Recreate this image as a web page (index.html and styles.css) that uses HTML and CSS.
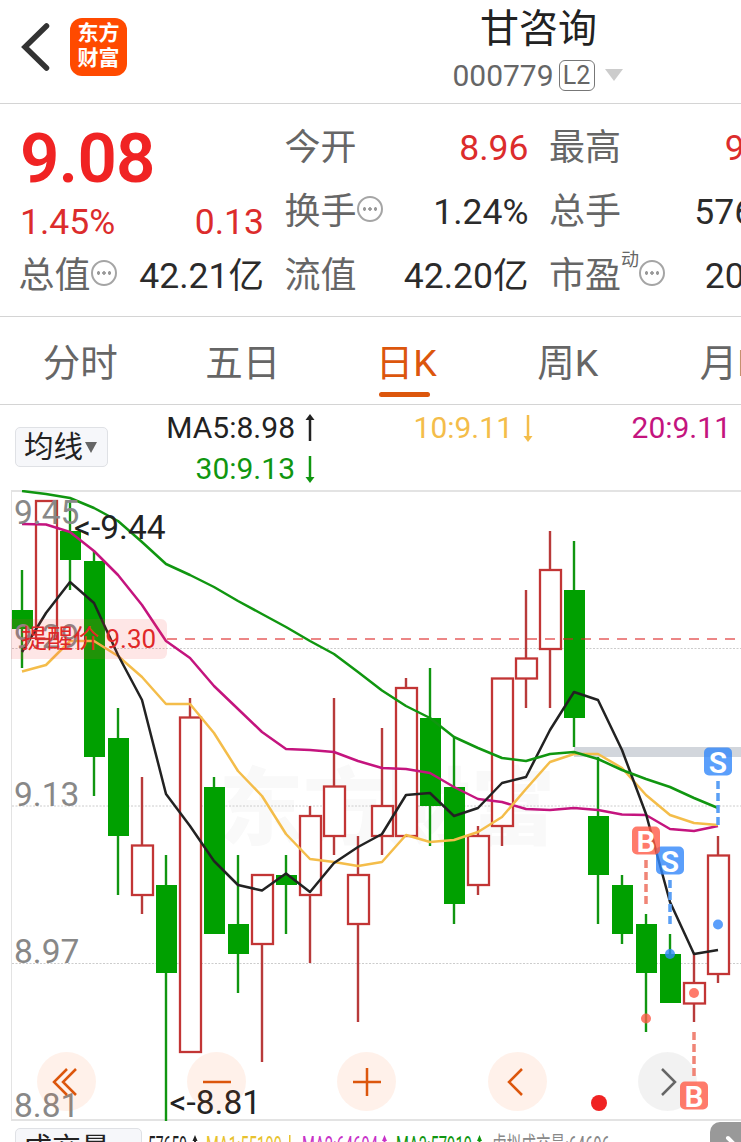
FILE: index.html
```html
<!DOCTYPE html>
<html lang="zh-CN">
<head>
    <meta charset="UTF-8">
    <meta name="viewport" content="width=device-width, initial-scale=1.0">
    <title>甘咨询 000779</title>
    <link rel="stylesheet" href="styles.css">
</head>
<body>

<div class="app">
    <header class="header">
        <div class="header-left">
            <svg class="back" width="30" height="50" viewBox="0 0 30 50"><path d="M26.500 4 L5 25 L26.500 46" fill="none" stroke="#333" stroke-width="5.500" stroke-linecap="round"/></svg>
            <div class="logo"><span>东方</span><span>财富</span></div>
        </div>
        <div class="stock">
            <div class="stock-name">甘咨询</div>
            <div class="stock-code">000779<span class="level">L2</span><span class="caret"></span></div>
        </div>
    </header>

    <section class="quote">
        <div class="quote-col first">
            <div class="price">9.08</div>
            <div class="row change"><span class="up">1.45%</span><span class="up">0.13</span></div>
            <div class="row"><label>总值<i class="more"></i></label><span>42.21亿</span></div>
        </div>
        <div class="quote-col">
            <div class="row"><label>今开</label><span class="up">8.96</span></div>
            <div class="row"><label>换手<i class="more"></i></label><span>1.24%</span></div>
            <div class="row"><label>流值</label><span>42.20亿</span></div>
        </div>
        <div class="quote-col">
            <div class="row"><label>最高</label><span class="up">9.10</span></div>
            <div class="row"><label>总手</label><span>57659</span></div>
            <div class="row"><label>市盈<sup>动</sup><i class="more"></i></label><span>20.29</span></div>
        </div>
    </section>

    <nav class="tabs">
        <div class="tab">分时</div>
        <div class="tab">五日</div>
        <div class="tab active">日K</div>
        <div class="tab">周K</div>
        <div class="tab">月K</div>
    </nav>

    <section class="averages">
        <div class="select">均线<span class="select-caret"></span></div>
        <div class="ma-list">
            <div class="ma ma5">MA5:8.98<svg width="12" height="28" viewBox="0 0 12 28"><path d="M6 27V4" stroke="currentColor" stroke-width="2.500"/><path d="M6 0L10.500 6H1.500z" fill="currentColor"/></svg></div>
            <div class="ma ma10">10:9.11<svg width="12" height="28" viewBox="0 0 12 28"><path d="M6 1V24" stroke="currentColor" stroke-width="2.500"/><path d="M6 28L10.500 22H1.500z" fill="currentColor"/></svg></div>
            <div class="ma ma20">20:9.11<svg width="12" height="28" viewBox="0 0 12 28"><path d="M6 1V24" stroke="currentColor" stroke-width="2.500"/><path d="M6 28L10.500 22H1.500z" fill="currentColor"/></svg></div>
            <div class="ma ma30">30:9.13<svg width="12" height="28" viewBox="0 0 12 28"><path d="M6 1V24" stroke="currentColor" stroke-width="2.500"/><path d="M6 28L10.500 22H1.500z" fill="currentColor"/></svg></div>
        </div>
    </section>

    <section class="chart">
        <svg class="kline" width="1080" height="632" viewBox="0 490 1080 632">
            <text class="watermark" x="219" y="838">东方财富</text>
            <g class="grid">
                <path d="M12 648.500H1080M12 806H1080M12 963.500H1080"/>
            </g>
            <path class="frame" d="M1080 491H11.500M1080 1120H11.500"/>
            <path class="frame side" d="M11.500 490V1121"/>
            <rect x="574" y="747" width="506" height="10" fill="#d2d6dc"/>
            <g id="candles"></g>
            <g id="lines"></g>
            <g class="axis">
                <text x="14" y="524">9.45</text>
                <text x="14" y="648">9.29</text>
                <text x="14" y="806">9.13</text>
                <text x="14" y="963">8.97</text>
                <text x="14" y="1117">8.81</text>
            </g>
            <path class="alert-line" d="M167 639H738"/>
            <path class="alert-box" d="M11 619H161a6 6 0 0 1 6 6V653a6 6 0 0 1-6 6H11z"/>
            <text class="alert-text" x="21" y="648">提醒价 9.30</text>
            <text class="mark" x="74" y="539">&lt;-9.44</text>
            <text class="mark" x="169.500" y="1114">&lt;-8.81</text>
            <circle cx="599" cy="1103" r="8" fill="#f02323"/>
        </svg>

        <div class="controls">
            <button><svg width="30" height="30" viewBox="0 0 30 30"><path d="M15 2L2 15L15 28M24 2L11 15L24 28"/></svg></button>
            <button><svg width="30" height="30" viewBox="0 0 30 30"><path d="M1 15H29"/></svg></button>
            <button><svg width="30" height="30" viewBox="0 0 30 30"><path d="M1 15H29M15 1V29"/></svg></button>
            <button><svg width="30" height="30" viewBox="0 0 30 30"><path d="M20 2L7 15L20 28"/></svg></button>
            <button class="disabled"><svg width="30" height="30" viewBox="0 0 30 30"><path d="M10 2L23 15L10 28"/></svg></button>
        </div>

        <svg class="trades" width="1080" height="632" viewBox="0 490 1080 632">
            <g class="sell">
                <path d="M718 781V825M670 880V925"/>
                <circle cx="718" cy="924.500" r="5"/>
                <circle cx="670" cy="954" r="5"/>
                <rect x="704" y="747.500" width="28" height="28" rx="5"/>
                <rect x="656" y="846.500" width="28" height="28" rx="5"/>
                <text x="718" y="772.500">S</text>
                <text x="670" y="871.500">S</text>
            </g>
            <g class="buy">
                <path d="M646 860V905M694 1032V1077"/>
                <circle cx="646" cy="1018.500" r="5"/>
                <circle cx="694" cy="993" r="5"/>
                <rect x="632" y="826.500" width="28" height="28" rx="5"/>
                <rect x="680" y="1081.500" width="28" height="28" rx="5"/>
                <text x="646" y="851.500">B</text>
                <text x="694" y="1106.500">B</text>
            </g>
        </svg>
    </section>

    <section class="volume">
        <div class="volume-select">成交量</div>
        <svg class="volume-info" width="600" height="40" viewBox="141 1122 600 40">
            <text x="147" y="1155" textLength="39" lengthAdjust="spacingAndGlyphs" fill="#222">57659</text>
            <text x="205" y="1155" textLength="76" lengthAdjust="spacingAndGlyphs" fill="#e8c22e">MA1:55199</text>
            <text x="301" y="1155" textLength="76" lengthAdjust="spacingAndGlyphs" fill="#c832c8">MA2:64694</text>
            <text x="395" y="1155" textLength="76" lengthAdjust="spacingAndGlyphs" fill="#109610">MA3:57919</text>
            <text x="491" y="1155" textLength="118" lengthAdjust="spacingAndGlyphs" fill="#888">虚拟成交量:64696</text>
            <path d="M194 1135l2.500 6h-1.500v16h-2v-16h-1.500z" fill="#222"/>
            <path d="M288 1135h1.500v20h-1.500z" fill="#e8c22e"/>
            <path d="M383.500 1135l2.500 6h-1.500v16h-2v-16h-1.500z" fill="#c832c8"/>
            <path d="M478.500 1135l2.500 6h-1.500v16h-2v-16h-1.500z" fill="#109610"/>
        </svg>
        <div class="expand"><svg width="30" height="30" viewBox="0 0 30 30"><path d="M6 4L18 16L6 28" fill="none" stroke="#fff" stroke-width="4" stroke-linecap="round"/></svg></div>
    </section>
</div>

<script src="chart.js"></script>
</body>
</html>
```

FILE: styles.css
```css
* {
    box-sizing: border-box;
}
html {
    overflow: hidden;
}
body {
    margin: 0;
    width: 741px;
    height: 1142px;
    overflow: hidden;
    background: #fff;
    color: #2b2b2b;
    font-family: Roboto, "Noto Sans CJK SC", sans-serif;
}
.app {
    width: 1080px;
}
.header {
    display: grid;
    grid-template-columns: 200px 1fr 200px;
    height: 104px;
    border-bottom: 1px solid #d4d4d4;
}
.header-left {
    display: flex;
    align-items: center;
    height: 93px;
    padding-left: 20px;
    gap: 20px;
}
.logo {
    display: flex;
    flex-direction: column;
    align-items: center;
    justify-content: center;
    width: 57px;
    height: 58px;
    padding-bottom: 2px;
    border-radius: 12px;
    background: #ff4a00;
    color: #fff;
    font-size: 21px;
    font-weight: 700;
    line-height: 25px;
}
.stock {
    text-align: center;
}
.stock-name {
    height: 56px;
    padding-right: 3px;
    font-size: 39px;
    line-height: 58px;
    color: #222;
}
.stock-code {
    display: flex;
    align-items: center;
    justify-content: center;
    height: 38px;
    padding-right: 5px;
    font-size: 30px;
    color: #666;
}
.level {
    width: 36px;
    height: 31px;
    margin-left: 5px;
    border: 1px solid #777;
    border-radius: 6px;
    font-size: 25px;
    line-height: 30px;
}
.caret {
    margin-left: 10px;
    border: 9px solid transparent;
    border-top: 12px solid #ccc;
    border-bottom: 0;
}
.quote {
    display: grid;
    grid-template-columns: 244px 242.5px 243.5px;
    column-gap: 22px;
    height: 213px;
    padding: 12px 20px 0;
    border-bottom: 1px solid #d4d4d4;
}
.row {
    display: flex;
    justify-content: space-between;
    align-items: center;
    height: 64px;
    font-size: 35.5px;
    line-height: 42px;
    white-space: nowrap;
}
.row label {
    display: flex;
    align-items: center;
    margin-left: -1.5px;
    font-size: 36px;
    color: #666;
}
.row sup {
    align-self: flex-start;
    margin-top: -5px;
    font-size: 18px;
    line-height: 20px;
}
.price {
    height: 84px;
    font-size: 69px;
    font-weight: 600;
    line-height: 86px;
    letter-spacing: -0.8px;
    color: #f02323;
}
.change {
    height: 44px;
}
.up {
    color: #dc2c2c;
}
.more {
    width: 26px;
    height: 26px;
    margin-top: -6px;
    border: 2px solid #a5a5a5;
    border-radius: 50%;
    background:
        radial-gradient(circle at 5.500px 11px, #999 1.500px, transparent 2px),
        radial-gradient(circle at 11px 11px, #999 1.500px, transparent 2px),
        radial-gradient(circle at 16.500px 11px, #999 1.500px, transparent 2px);
}
.tabs {
    display: flex;
    height: 88px;
    border-bottom: 1px solid #d4d4d4;
}
.tab {
    display: flex;
    flex-direction: column;
    align-items: center;
    width: 162.5px;
    font-size: 37.5px;
    line-height: 86px;
    height: 87px;
    padding-top: 3px;
    padding-right: 2px;
    color: #666;
}
.tab.active {
    padding-right: 0;
    color: #dc560c;
}
.tab.active::after {
    content: "";
    width: 51px;
    height: 5px;
    margin-top: -14px;
    margin-right: 4px;
    border-radius: 3px;
    background: #dc560c;
}
.averages {
    display: flex;
    height: 85px;
}
.select {
    display: flex;
    align-items: center;
    width: 93px;
    height: 40px;
    margin: 22px 0 0 15px;
    padding-left: 8px;
    border: 1px solid #dfe1e5;
    border-radius: 5px;
    background: #f6f7fa;
    font-size: 29.5px;
    line-height: 40px;
    color: #222;
}
.select-caret {
    margin-left: 2px;
    border: 6.500px solid transparent;
    border-top: 11px solid #666;
    border-bottom: 0;
}
.ma-list {
    display: grid;
    grid-template-columns: 208px 218px 218px;
    grid-auto-rows: 41px;
    padding-top: 2px;
}
.ma {
    display: flex;
    align-items: center;
    justify-content: flex-end;
    gap: 9px;
    font-size: 30px;
}
.ma5 {
    color: #222;
}
.ma10 {
    color: #f4bd4a;
}
.ma20 {
    color: #c4147e;
}
.ma30 {
    color: #109610;
}
.chart {
    position: relative;
    height: 632px;
}
.kline, .trades {
    display: block;
}
.trades {
    position: absolute;
    top: 0;
    left: 0;
}
.watermark {
    font-family: "Noto Sans CJK SC", sans-serif;
    font-size: 84px;
    font-weight: 900;
    fill: #f9f9f9;
}
.grid path {
    stroke: #ccc;
    stroke-width: 1;
    stroke-dasharray: 2 1.500;
}
.frame {
    fill: none;
    stroke: #e3e3e3;
    stroke-width: 2;
}
.side {
    stroke-width: 1;
}
.axis {
    font-size: 33.5px;
    fill: #888;
}
.mark {
    font-size: 33.5px;
    fill: #222;
}
.alert-line {
    stroke: rgba(220, 35, 35, 0.55);
    stroke-width: 2;
    stroke-dasharray: 10 8;
}
.alert-box {
    fill: rgba(245, 60, 60, 0.13);
}
.alert-text {
    font-size: 26px;
    fill: #e02828;
}
.candle-down {
    fill: #00a000;
}
.candle-up {
    fill: #fff;
    stroke: #c23535;
    stroke-width: 2.300;
}
.wick-down {
    stroke: #109610;
    stroke-width: 2.400;
}
.wick-up {
    stroke: #b83a3a;
    stroke-width: 2.400;
}
.line {
    fill: none;
    stroke: currentColor;
    stroke-width: 2.500;
    stroke-linejoin: round;
}
.controls {
    position: absolute;
    top: 562px;
    left: 37px;
    display: flex;
    gap: 91.2px;
}
.controls button {
    display: flex;
    align-items: center;
    justify-content: center;
    width: 59px;
    height: 59px;
    padding: 0;
    border: none;
    border-radius: 50%;
    background: rgba(255, 95, 20, 0.09);
}
.controls path {
    fill: none;
    stroke: #dc560c;
    stroke-width: 2.500;
}
.controls .disabled {
    background: rgba(0, 0, 0, 0.05);
}
.controls .disabled path {
    stroke: #666;
}
.trades path {
    stroke-width: 3.500;
    stroke-dasharray: 8 4;
}
.trades text {
    font-size: 30px;
    font-weight: 600;
    text-anchor: middle;
    fill: #fff;
}
.sell {
    fill: rgba(50, 135, 250, 0.8);
    stroke: none;
}
.sell path {
    stroke: #5a9ff5;
}
.buy {
    fill: rgba(255, 90, 70, 0.8);
}
.buy path {
    stroke: #f08476;
}
.volume {
    display: flex;
    width: 741px;
    height: 20px;
    overflow: hidden;
}
.volume-select {
    flex: none;
    width: 127px;
    height: 40px;
    margin: 6px 0 0 15px;
    padding-left: 7px;
    border: 1px solid #dfe1e5;
    border-radius: 5px;
    background: #f6f7fa;
    font-size: 29px;
    line-height: 40px;
    color: #222;
}
.volume-info {
    flex: none;
    width: 600px;
    margin-right: -32px;
    font-size: 25px;
}
.expand {
    flex: none;
    width: 60px;
    height: 60px;
    padding: 12px;
    border-radius: 10px 0 0 10px;
    background: #999;
}
```

FILE: chart.js
```js
const STEP = 24;
const FIRST = 22;

// [direction, high, body top, body bottom, low]
const candles = [
    ["down", 570, 610, 629, 668],
    ["up", 501, 501, 639, 639],
    ["down", 501, 531, 560, 590],
    ["down", 551, 561, 757, 796],
    ["down", 708, 738, 836, 895],
    ["up", 777, 845.5, 895, 914],
    ["down", 855, 885, 973, 1121],
    ["up", 698, 717.5, 1052, 1052],
    ["down", 777, 787, 934, 934],
    ["down", 855, 924, 954, 993],
    ["up", 875, 875, 944, 1062],
    ["down", 855, 875, 885, 934],
    ["up", 806, 816, 895, 963],
    ["up", 698, 786.5, 836, 855],
    ["up", 836, 875, 924, 1022],
    ["up", 728, 806, 836, 855],
    ["up", 678, 688, 836, 836],
    ["down", 668, 718, 806, 846],
    ["down", 737, 787, 904, 924],
    ["up", 826, 836, 885, 895],
    ["up", 678, 678.5, 826, 846],
    ["up", 590, 658.5, 678.5, 708],
    ["up", 531, 570, 649, 708],
    ["down", 541, 590, 718, 747],
    ["down", 757, 816, 875, 924],
    ["down", 875, 885, 934, 944],
    ["down", 914, 924, 973, 1032],
    ["down", 934, 954, 1003, 1003],
    ["up", 953, 983, 1003.5, 1022],
    ["up", 836, 855.5, 974, 983]
];

const averages = {
    ma20: [524, 524.5, 532, 551, 575, 605, 641, 658, 686, 709, 732, 749, 750, 752, 761, 768, 769, 773, 787, 799, 802, 809, 810, 808, 810, 814.5, 815, 829, 831, 826],
    ma10: [671.5, 665, 641, 641, 656, 677, 704, 704, 733, 771, 796, 834, 859, 862, 866, 862, 835, 842, 840, 832, 817, 789, 762, 754, 754, 768, 795, 815, 823, 825],
    ma5: [652, 613, 582, 603, 655, 700, 794, 826, 861, 885, 890.5, 873.5, 892, 863, 847, 834, 795, 793, 816, 808, 783, 777, 730, 692, 700, 750, 814, 902, 954, 950],
    ma30: [491, 494, 498, 508, 521, 542, 564, 575, 587, 601, 614, 627, 641, 654, 672, 690.5, 706, 718, 737, 748, 758, 761, 754, 752, 759, 770, 779, 787, 798, 808]
};

let html = "";
candles.forEach(([dir, high, top, bottom, low], i) => {
    const x = FIRST + i * STEP;
    html += `<path class="wick-${dir}" d="M${x} ${high}V${low}"/>`;
    html += `<rect class="candle-${dir}" x="${x - 10}" y="${top}" width="21" height="${bottom - top}"/>`;
});
document.getElementById("candles").innerHTML = html;

let lines = "";
for (const name in averages) {
    const points = averages[name].map((y, i) => `${FIRST + i * STEP},${y}`).join(" ");
    lines += `<polyline class="line ${name}" points="${points}"/>`;
}
document.getElementById("lines").innerHTML = lines;
```
